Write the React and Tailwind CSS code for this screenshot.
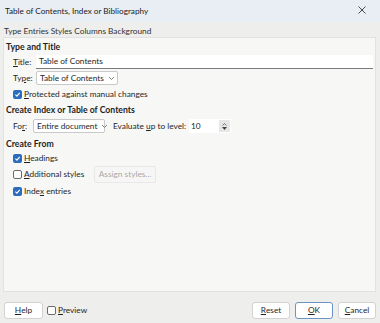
import React from "react"

const font = { fontFamily: 'Lato, "Open Sans", sans-serif' }

function Check({ on }) {
  return on ? (
    <span className="inline-flex h-[9px] w-[9px] shrink-0 items-center justify-center rounded-[2px] bg-[#2d6cbd]">
      <svg width="7" height="7" viewBox="0 0 10 10">
        <path d="M2 5.2 L4.2 7.4 L8.2 2.8" stroke="white" strokeWidth="1.6" fill="none" />
      </svg>
    </span>
  ) : (
    <span className="inline-block h-[9px] w-[9px] shrink-0 rounded-[2px] border border-[#6b6b6b] bg-white" />
  )
}

function U({ children }) {
  return <span className="underline underline-offset-[1px]">{children}</span>
}

function Select({ label, w }) {
  return (
    <div className={`flex h-[14px] shrink-0 items-center justify-between whitespace-nowrap rounded-[2px] border border-[#c9c9c9] bg-white pl-[3px] pr-[3px] ${w}`}>
      <span>{label}</span>
      <svg width="7" height="5" viewBox="0 0 7 5" className="ml-1 shrink-0">
        <path d="M1 1 L3.5 3.5 L6 1" stroke="#777" strokeWidth="0.9" fill="none" />
      </svg>
    </div>
  )
}

function Btn({ children, w, active }) {
  return (
    <div
      className={`flex h-[17px] items-center justify-center rounded-[3px] border bg-white ${w} ${
        active ? "border-[#6a93c8]" : "border-[#d2d2d2]"
      }`}
    >
      {children}
    </div>
  )
}

export default function App() {
  return (
    <div className="h-[323px] w-[380px] overflow-hidden whitespace-nowrap bg-[#eeeeec] text-[8.3px] text-[#1f1f1f]" style={font}>
      {/* title bar */}
      <div className="flex h-[22px] items-center justify-between bg-[#e8eef4] pl-[5px] pr-[14px]">
        <span className="text-[8.2px] text-[#222]">Table of Contents, Index or Bibliography</span>
        <svg width="8" height="8" viewBox="0 0 8 8" className="-mt-[3px]">
          <path d="M0.5 0.5 L7.5 7.5 M7.5 0.5 L0.5 7.5" stroke="#333" strokeWidth="0.9" />
        </svg>
      </div>

      {/* tabs */}
      <div className="mt-[3px] flex h-[12px] items-center gap-[2px] pl-[4px] text-[#333]">
        <span>Type</span>
        <span>Entries</span>
        <span>Styles</span>
        <span>Columns</span>
        <span>Background</span>
      </div>

      {/* panel */}
      <div className="ml-[3px] mr-[4px] h-[255px] border border-[#e2e2e0] bg-[#f7f7f5] px-[2px] pt-[2px]">
        <div className="flex h-[14px] items-center text-[8.7px] font-bold">Type and Title</div>

        <div className="flex h-[16px] items-center pl-[7px]">
          <span className="w-[23px]"><U>T</U>itle:</span>
          <div className="flex h-[14px] flex-1 items-center border-b border-b-[#7a7a7a] bg-white pl-[3px]">Table of Contents</div>
        </div>

        <div className="flex h-[16px] items-center pl-[7px]">
          <span className="w-[23px]">Ty<U>p</U>e:</span>
          <Select label="Table of Contents" w="w-[82px]" />
        </div>

        <div className="flex h-[16px] items-center gap-[2px] pl-[7px]">
          <Check on />
          <span><U>P</U>rotected against manual changes</span>
        </div>

        <div className="flex h-[16px] items-center text-[8.7px] font-bold">Create Index or Table of Contents</div>

        <div className="flex h-[16px] items-center pl-[7px]">
          <span className="w-[20px]">Fo<U>r</U>:</span>
          <Select label="Entire document" w="w-[72px]" />
          <span className="ml-[8px] w-[70px]">Evaluate <U>u</U>p to level:</span>
          <div className="ml-[6px] flex h-[14px] w-[42px] items-center justify-between bg-white pl-[2px] pr-[1px]">
            <span>10</span>
            <div className="flex h-[12px] w-[11px] flex-col items-center justify-center bg-[#e6e6e6]">
              <svg width="5" height="3" viewBox="0 0 5 3"><path d="M0.5 2.5 L2.5 0.5 L4.5 2.5" stroke="#555" strokeWidth="0.8" fill="none" /></svg>
              <svg width="5" height="3" viewBox="0 0 5 3" className="mt-[1px]"><path d="M0 0 L5 0 L2.5 3 Z" fill="#444" /></svg>
            </div>
          </div>
        </div>

        <div className="mt-[3px] flex h-[14px] items-center text-[8.7px] font-bold">Create From</div>

        <div className="flex h-[14px] items-center gap-[2px] pl-[7px]">
          <Check on />
          <span><U>H</U>eadings</span>
        </div>

        <div className="flex h-[18px] items-center pl-[7px]">
          <Check />
          <span className="ml-[2px] w-[70px]"><U>A</U>dditional styles</span>
          <div className="flex h-[17px] w-[62px] items-center justify-center rounded-[2px] border border-[#e8e8e8] bg-[#f6f6f6] text-[#a8a8a8]">
            Assign styles...
          </div>
        </div>

        <div className="flex h-[16px] items-center gap-[2px] pl-[7px]">
          <Check on />
          <span>Inde<U>x</U> entries</span>
        </div>
      </div>

      {/* bottom buttons */}
      <div className="mt-[10px] flex items-center px-[4px]">
        <Btn w="w-[39px]"><U>H</U>elp</Btn>
        <div className="ml-[4px] flex items-center gap-[2px]">
          <Check />
          <span><U>P</U>review</span>
        </div>
        <div className="ml-auto flex gap-[5px]">
          <Btn w="w-[38px]"><U>R</U>eset</Btn>
          <Btn w="w-[38px]" active><U>O</U>K</Btn>
          <Btn w="w-[38px]"><U>C</U>ancel</Btn>
        </div>
      </div>
    </div>
  )
}
